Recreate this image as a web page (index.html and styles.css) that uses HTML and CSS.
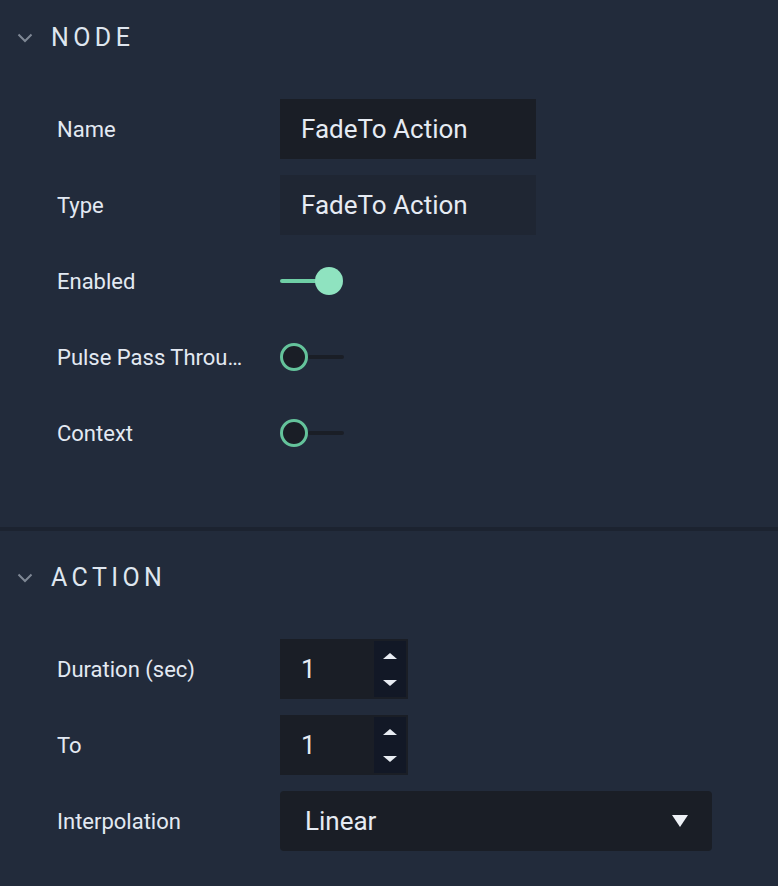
FILE: index.html
```html
<!DOCTYPE html>
<html>
<head>
<meta charset="utf-8">
<link rel="stylesheet" href="styles.css">
</head>
<body>
<div class="panel">
  <section class="section first">
    <div class="sec-head">
      <svg class="chev" width="16" height="10" viewBox="0 0 16 10"><path d="M1.5 1.5 L8 8 L14.5 1.5" fill="none" stroke="#7f8895" stroke-width="2"/></svg>
      <span class="sec-title">NODE</span>
    </div>
    <div class="rows">
      <div class="row"><div class="label">Name</div><div class="text-input">FadeTo Action</div></div>
      <div class="row"><div class="label">Type</div><div class="text-input readonly">FadeTo Action</div></div>
      <div class="row"><div class="label">Enabled</div>
        <div class="toggle on"><span class="track"></span><span class="knob"></span></div></div>
      <div class="row"><div class="label">Pulse Pass Throu…</div>
        <div class="toggle off"><span class="knob"></span><span class="track"></span></div></div>
      <div class="row"><div class="label">Context</div>
        <div class="toggle off"><span class="knob"></span><span class="track"></span></div></div>
    </div>
  </section>
  <div class="sep"></div>
  <section class="section second">
    <div class="sec-head">
      <svg class="chev" width="16" height="10" viewBox="0 0 16 10"><path d="M1.5 1.5 L8 8 L14.5 1.5" fill="none" stroke="#7f8895" stroke-width="2"/></svg>
      <span class="sec-title">ACTION</span>
    </div>
    <div class="rows">
      <div class="row"><div class="label">Duration (sec)</div>
        <div class="num-input"><span class="num-val">1</span>
          <div class="spin"><span class="arr up"></span><span class="arr down"></span></div></div></div>
      <div class="row"><div class="label">To</div>
        <div class="num-input"><span class="num-val">1</span>
          <div class="spin"><span class="arr up"></span><span class="arr down"></span></div></div></div>
      <div class="row"><div class="label">Interpolation</div>
        <div class="select"><span>Linear</span><span class="caret"></span></div></div>
    </div>
  </section>
</div>
</body>
</html>
```
FILE: styles.css
```css
html, body {
  margin: 0;
  padding: 0;
  background: #222b3b;
  font-family: Roboto, "Noto Sans", sans-serif;
  color: #e3e9f2;
}
.panel {
  width: 778px;
  height: 886px;
  overflow: hidden;
}
.section.first {
  padding-bottom: 64px;
}
.section.second {
  padding-top: 9px;
}
.sep {
  height: 4px;
  background: #1c2330;
}
.sec-head {
  height: 74px;
  display: flex;
  align-items: center;
  padding-left: 17px;
}
.chev {
  display: block;
  margin-right: 18px;
  margin-top: 2px;
}
.sec-title {
  font-size: 25px;
  letter-spacing: 4.4px;
  font-weight: 400;
  color: #dfe6ef;
}
.rows {
  padding-top: 25px;
  display: flex;
  flex-direction: column;
  gap: 16px;
}
.row {
  height: 60px;
  display: flex;
  align-items: center;
  padding-left: 57px;
}
.label {
  width: 223px;
  font-size: 22px;
  color: #e3e9f2;
  white-space: nowrap;
}
.text-input {
  width: 256px;
  height: 60px;
  box-sizing: border-box;
  background: #1a1e26;
  padding-left: 21px;
  display: flex;
  align-items: center;
  font-size: 26px;
  color: #e6ebf3;
}
.text-input.readonly {
  background: #1f2633;
}
.toggle {
  position: relative;
  display: flex;
  align-items: center;
  height: 28px;
}
.toggle.on .track {
  width: 40px;
  height: 4px;
  border-radius: 2px;
  background: #6fcfa6;
}
.toggle.on .knob {
  width: 28px;
  height: 28px;
  border-radius: 50%;
  background: #8fe3c0;
  margin-left: -5px;
}
.toggle.off .knob {
  width: 28px;
  height: 28px;
  box-sizing: border-box;
  border-radius: 50%;
  border: 3px solid #64c39b;
  background: #1a1e26;
}
.toggle.off .track {
  width: 36px;
  height: 4px;
  border-radius: 2px;
  background: #1a1e26;
}
.num-input {
  width: 128px;
  height: 60px;
  box-sizing: border-box;
  background: #1a1e26;
  display: flex;
  align-items: center;
  justify-content: space-between;
  padding: 2px 2px 2px 21px;
}
.num-val {
  font-size: 26px;
  color: #e6ebf3;
}
.spin {
  width: 32px;
  height: 56px;
  background: #121826;
  display: flex;
  flex-direction: column;
  align-items: center;
  justify-content: space-between;
  padding: 12px 0 11px;
  box-sizing: border-box;
}
.arr {
  width: 0;
  height: 0;
  border-left: 7px solid transparent;
  border-right: 7px solid transparent;
}
.arr.up {
  border-bottom: 6px solid #e8ecf2;
}
.arr.down {
  border-top: 6px solid #e8ecf2;
}
.select {
  width: 432px;
  height: 60px;
  box-sizing: border-box;
  background: #1a1e26;
  border-radius: 4px;
  display: flex;
  align-items: center;
  justify-content: space-between;
  padding: 0 24px 0 25px;
  font-size: 26px;
  color: #e6ebf3;
}
.caret {
  width: 0;
  height: 0;
  border-left: 8px solid transparent;
  border-right: 8px solid transparent;
  border-top: 12px solid #eef1f6;
}
```
